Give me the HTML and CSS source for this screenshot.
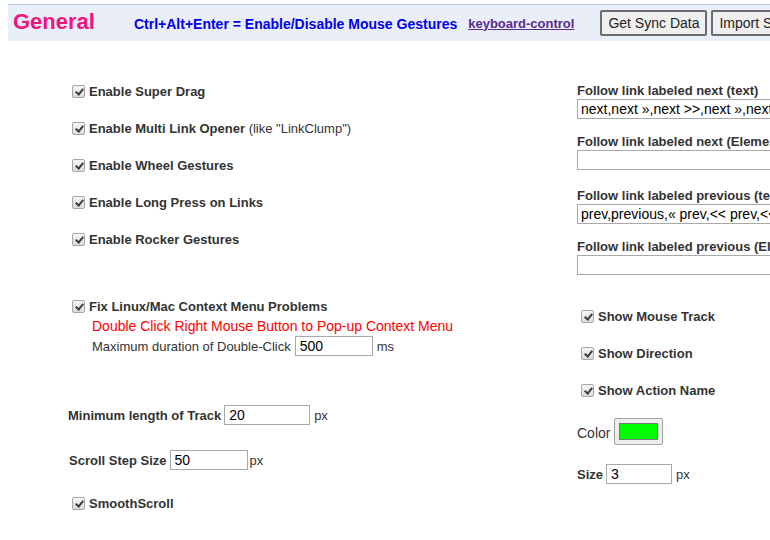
FILE: index.html
```html
<!DOCTYPE html>
<html lang="en">
<head>
  <meta charset="UTF-8" />
  <title>Options - General</title>
  <link rel="stylesheet" href="styles.css">
</head>
<body>

  <div class="topbar">
    <h1>General</h1>
    <span class="hotkey">Ctrl+Alt+Enter = Enable/Disable Mouse Gestures</span>
    <a class="kbd-link" href="#">keyboard-control</a>
    <button class="btn">Get Sync Data</button>
    <button class="btn">Import Sync Data</button>
  </div>

  <div class="main">
    <div class="col-left">
      <label class="check-row"><span class="cb"></span><b>Enable Super Drag</b></label>
      <label class="check-row"><span class="cb"></span><span><b>Enable Multi Link Opener</b> <span class="note">(like "LinkClump")</span></span></label>
      <label class="check-row"><span class="cb"></span><b>Enable Wheel Gestures</b></label>
      <label class="check-row"><span class="cb"></span><b>Enable Long Press on Links</b></label>
      <label class="check-row"><span class="cb"></span><b>Enable Rocker Gestures</b></label>

      <div class="fix-block">
        <label class="line"><span class="cb"></span><b>Fix Linux/Mac Context Menu Problems</b></label>
        <div class="line indent warn">Double Click Right Mouse Button to Pop-up Context Menu</div>
        <div class="line indent">Maximum duration of Double-Click <input class="num" type="text" value="500"> <span class="unit">ms</span></div>
      </div>

      <div class="field track"><b>Minimum length of Track</b> <input class="num long" type="text" value="20"> <span class="unit">px</span></div>
      <div class="field scroll"><b>Scroll Step Size</b> <input class="num" type="text" value="50"><span class="unit tight">px</span></div>
      <label class="line smooth"><span class="cb"></span><b>SmoothScroll</b></label>
    </div>

    <div class="col-right">
      <div class="link-label first">Follow link labeled next (text)</div>
      <input class="wide" type="text" value="next,next »,next >>,next »,next >,next ›,more">
      <div class="link-label">Follow link labeled next (Element ID/Class)</div>
      <input class="wide" type="text" value="">
      <div class="link-label prev">Follow link labeled previous (text)</div>
      <input class="wide" type="text" value="prev,previous,« prev,<< prev,<< previous">
      <div class="link-label">Follow link labeled previous (Element ID/Class)</div>
      <input class="wide" type="text" value="">

      <div class="track-opts">
        <label class="check-row"><span class="cb"></span><b>Show Mouse Track</b></label>
        <label class="check-row"><span class="cb"></span><b>Show Direction</b></label>
        <label class="check-row"><span class="cb"></span><b>Show Action Name</b></label>
      </div>
      <div class="color-row">Color <button class="color-btn"><span class="swatch"></span></button></div>
      <div class="field size"><b>Size</b> <input class="num small" type="text" value="3"> <span class="unit">px</span></div>
    </div>
  </div>

</body>
</html>
```

FILE: styles.css
```css
body {
  margin: 0;
  padding: 4px 0 0 8px;
  width: 762px;
  height: 536px;
  overflow: hidden;
  font-family: "Liberation Sans", Arial, sans-serif;
  font-size: 13px;
  color: #333;
  background: #fff;
}
.topbar {
  width: 1000px;
  height: 36px;
  border-top: 1px solid #b7c9e2;
  background: #eaeef9;
  display: flex;
  align-items: center;
  padding-left: 5px;
  white-space: nowrap;
}
.topbar h1 {
  margin: 0 39px 0 0;
  font-size: 22px;
  color: #f0147c;
  line-height: 1;
  position: relative;
  top: -1px;
}
.hotkey {
  color: #0000f0;
  font-weight: bold;
  font-size: 14px;
  margin-right: 11px;
  position: relative;
  top: 1px;
}
.kbd-link {
  color: #5a2a8e;
  font-weight: bold;
  font-size: 13px;
  margin-right: 26px;
}
.btn {
  font-family: "Liberation Sans", Arial, sans-serif;
  font-size: 14px;
  color: #222;
  background: #efefef;
  border: 2px solid #6b6b6b;
  border-radius: 2px;
  height: 26px;
  padding: 0 6px;
  margin-right: 4px;
}
.main {
  display: grid;
  grid-template-columns: 509px 1fr;
  padding-left: 60px;
}
.cb {
  display: inline-block;
  width: 11px;
  height: 11px;
  border: 1px solid #a6a6a6;
  border-radius: 2px;
  background: linear-gradient(#f6f6f6, #dcdcdc);
  position: relative;
  flex-shrink: 0;
}
.cb::after {
  content: "";
  position: absolute;
  left: 4px;
  top: 1px;
  width: 3px;
  height: 6px;
  border: solid #3c3c3c;
  border-width: 0 2px 2px 0;
  transform: rotate(40deg);
}
.check-row,
.line {
  display: flex;
  align-items: center;
  gap: 4px;
  padding-left: 4px;
}
.check-row {
  height: 37px;
}
.col-left > .check-row:first-child {
  margin-top: 32px;
}
b {
  font-size: 13px;
  font-weight: bold;
}
.note {
  font-size: 13px;
}
.fix-block {
  margin-top: 38px;
}
.line {
  height: 20px;
}
.indent {
  padding-left: 24px;
}
.warn {
  color: #f00;
  font-size: 14px;
}
input {
  font-family: "Liberation Sans", Arial, sans-serif;
  font-size: 14px;
  color: #000;
  border: 1px solid #a9a9a9;
  height: 20px;
  box-sizing: border-box;
  padding: 0 4px;
  margin: 0;
}
.num {
  width: 78px;
}
.num.long {
  width: 86px;
}
.num.small {
  width: 66px;
}
.unit {
  margin-left: 1px;
}
.line .unit {
  margin-left: 0;
}
.unit.tight {
  margin-left: -1px;
}
.field {
  display: flex;
  align-items: center;
  gap: 3px;
  height: 20px;
}
.track {
  margin-top: 49px;
}
.scroll {
  margin-top: 25px;
  padding-left: 1px;
}
.smooth {
  margin-top: 23px;
}
.col-right {
  display: flex;
  flex-direction: column;
  align-items: flex-start;
}
.link-label {
  font-weight: bold;
  height: 16px;
  line-height: 16px;
  margin-top: 15px;
  white-space: nowrap;
}
.link-label.first {
  margin-top: 42px;
}
.link-label.prev {
  margin-top: 18px;
}
.wide {
  width: 240px;
  padding: 0 3px;
}
.track-opts {
  margin-top: 23px;
}
.color-row {
  display: flex;
  align-items: center;
  gap: 4px;
  font-size: 14px;
  margin-top: 10px;
}
.color-btn {
  width: 49px;
  height: 27px;
  padding: 0;
  background: #ececec;
  border: 1px solid #a3a3a3;
  border-radius: 2px;
  display: flex;
  align-items: center;
  justify-content: center;
  position: relative;
  top: -1px;
}
.swatch {
  display: block;
  width: 37px;
  height: 15px;
  background: #00ff00;
  border: 1px solid #777;
}
.size {
  margin-top: 18px;
}
```
